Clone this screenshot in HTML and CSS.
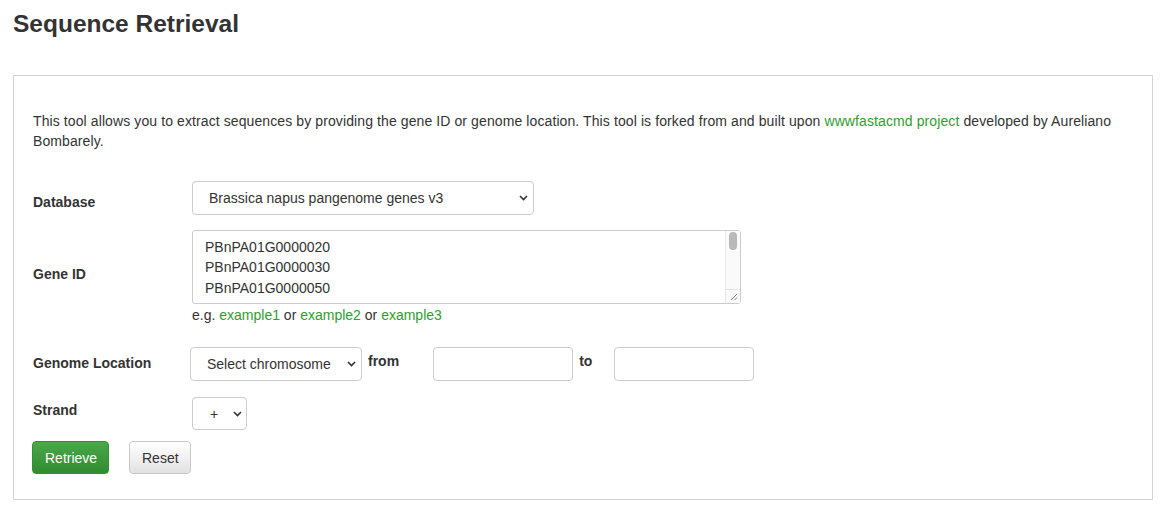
FILE: index.html
```html
<!DOCTYPE html>
<html lang="en">
<head>
<meta charset="utf-8">
<title>Sequence Retrieval</title>
<link rel="stylesheet" href="styles.css">
</head>
<body>
<h1 class="title">Sequence Retrieval</h1>
<div class="panel">
  <p class="intro">This tool allows you to extract sequences by providing the gene ID or genome location. This tool is forked from and built upon <a href="#">wwwfastacmd project</a> developed by Aureliano Bombarely.</p>

  <div class="row row-db">
    <div class="label label-db">Database</div>
    <div class="select-wrap select-db">
      <select class="select"><option>Brassica napus pangenome genes v3</option></select>
      <svg class="chev" width="9" height="6" viewBox="0 0 9 6"><path d="M1 1l3.5 3.5L8 1" fill="none" stroke="#333" stroke-width="1.6"/></svg>
    </div>
  </div>

  <div class="row row-gene">
    <div class="label label-gene">Gene ID</div>
    <div class="gene-cell">
      <div class="ids-wrap">
        <textarea class="ids">PBnPA01G0000020
PBnPA01G0000030
PBnPA01G0000050
PBnPA01G0000070
PBnPA01G0000080
PBnPA01G0000090
PBnPA01G0000100
PBnPA01G0000110
PBnPA01G0000120
PBnPA01G0000130</textarea>
        <div class="scrollbar">
          <div class="thumb"></div>
          <div class="grip">
            <svg width="8" height="8" viewBox="0 0 8 8"><path d="M1 7L7 1M4.5 7L7 4.5" stroke="#777" stroke-width="1" fill="none"/></svg>
          </div>
        </div>
      </div>
      <div class="examples">e.g. <a href="#">example1</a> or <a href="#">example2</a> or <a href="#">example3</a></div>
    </div>
  </div>

  <div class="row row-loc">
    <div class="label label-loc">Genome Location</div>
    <div class="select-wrap select-chr">
      <select class="select"><option>Select chromosome</option></select>
      <svg class="chev" width="9" height="6" viewBox="0 0 9 6"><path d="M1 1l3.5 3.5L8 1" fill="none" stroke="#333" stroke-width="1.6"/></svg>
    </div>
    <span class="inline-label from">from</span>
    <input class="num" type="text">
    <span class="inline-label to">to</span>
    <input class="num" type="text">
  </div>

  <div class="row row-strand">
    <div class="label label-strand">Strand</div>
    <div class="select-wrap select-strand">
      <select class="select"><option>+</option></select>
      <svg class="chev" width="9" height="6" viewBox="0 0 9 6"><path d="M1 1l3.5 3.5L8 1" fill="none" stroke="#333" stroke-width="1.6"/></svg>
    </div>
  </div>

  <div class="actions">
    <button class="btn btn-success" type="button">Retrieve</button>
    <button class="btn btn-default" type="button">Reset</button>
  </div>
</div>
</body>
</html>
```

FILE: styles.css
```css
* { box-sizing: border-box; }

body {
  margin: 0;
  font-family: "Liberation Sans", Arial, sans-serif;
  font-size: 14px;
  color: #333;
  background: #fff;
}

a { color: #2f9e2f; text-decoration: none; }

.title {
  margin: 10px 0 0 13px;
  font-size: 24.5px;
  line-height: 28px;
  font-weight: bold;
  color: #333;
}

.panel {
  margin: 37px 21px 0 13px;
  border: 1px solid #d4d4d4;
  padding: 0 19px 25px 19px;
}

.intro {
  margin: 35px 0 0 0;
  line-height: 20px;
  letter-spacing: 0.1px;
}

.row {
  display: flex;
  align-items: center;
}

.label {
  width: 159px;
  flex: none;
  font-weight: bold;
  line-height: 20px;
}

.row-db { margin-top: 30px; }
.label-db { margin-top: 7px; }

.row-gene { margin-top: 15px; }
.label-gene { margin-bottom: 8px; }

.row-loc { margin-top: 22px; }
.label-loc { width: 157px; margin-top: -2px; }

.row-strand { margin-top: 16px; }
.label-strand { margin-top: -8px; }

.select-wrap {
  position: relative;
  flex: none;
}

.select {
  appearance: none;
  -webkit-appearance: none;
  width: 100%;
  height: 100%;
  border: 1px solid #ccc;
  border-radius: 4px;
  background: #fff;
  font-family: inherit;
  font-size: 14px;
  color: #333;
  padding: 0 24px 0 16px;
  display: block;
}

.chev {
  position: absolute;
  top: 50%;
  right: 6px;
  margin-top: -3px;
  pointer-events: none;
}

.select-db { width: 342px; height: 34px; }
.select-chr { width: 172px; height: 34px; }
.select-strand { width: 55px; height: 33px; }
.select-strand .select { padding-left: 17px; }
.select-strand .chev { right: 5px; }

.gene-cell { display: flex; flex-direction: column; }

.ids-wrap {
  position: relative;
  width: 549px;
  height: 74px;
}

.ids {
  display: block;
  width: 100%;
  height: 100%;
  border: 1px solid #ccc;
  border-radius: 3px;
  padding: 6px 30px 0 12px;
  font-family: inherit;
  font-size: 14px;
  line-height: 20.3px;
  color: #333;
  resize: none;
  overflow: hidden;
}

.scrollbar {
  position: absolute;
  top: 1px;
  right: 1px;
  bottom: 1px;
  width: 15px;
  background: #fafafa;
  border-left: 1px solid #e8e8e8;
  display: flex;
  flex-direction: column;
  justify-content: space-between;
}

.thumb {
  margin: 1px 3px 0 3px;
  height: 18px;
  border-radius: 4px;
  background: #b9b9b9;
}

.grip {
  height: 14px;
  border-top: 1px solid #e3e3e3;
  display: flex;
  align-items: flex-end;
  justify-content: flex-end;
  padding: 0 2px 2px 0;
}

.grip svg { display: block; }

.examples {
  margin-top: 1px;
  line-height: 20px;
}

.inline-label {
  font-weight: bold;
  align-self: center;
}

.from { margin: -6px 34px 0 6px; }
.to { margin: -6px 22px 0 6px; }

.num {
  width: 140px;
  height: 34px;
  border: 1px solid #ccc;
  border-radius: 4px;
  font-family: inherit;
  font-size: 14px;
  padding: 0 8px;
}

.actions {
  display: flex;
  gap: 20px;
  margin: 11px 0 0 -1px;
}

.btn {
  height: 33px;
  border-radius: 4px;
  font-family: inherit;
  font-size: 14px;
  padding: 0 12px;
  cursor: pointer;
}

.btn-success {
  width: 77px;
  color: #fff;
  border: 1px solid #348f34;
  background: linear-gradient(#4aa84a, #2f8c2f);
}

.btn-default {
  width: 62px;
  color: #333;
  border: 1px solid #c8c8c8;
  background: linear-gradient(#fff, #e2e2e2);
}
```
